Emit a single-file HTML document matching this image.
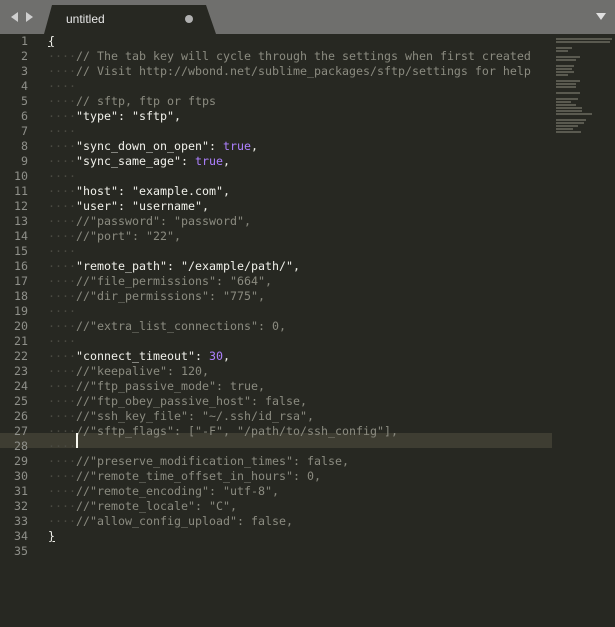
<!DOCTYPE html>
<html><head><meta charset="utf-8"><style>
*{margin:0;padding:0;box-sizing:border-box}
html,body{width:615px;height:627px;overflow:hidden;background:#272822}
.bar{position:absolute;left:0;top:0;width:615px;height:34px;background:#6f6f6d}
.tab{position:absolute;left:44px;top:5px;width:172px;height:29px;background:#272822;clip-path:polygon(8px 0,162px 0,172px 29px,0 29px);}
.tab span{position:absolute;left:22px;top:7px;font:12px "Liberation Sans",sans-serif;color:#e8e8e8}
.dot{position:absolute;left:141px;top:10px;width:8px;height:8px;border-radius:50%;background:#b0b0b0}
.arr{position:absolute;top:12px;width:0;height:0;border-top:5px solid transparent;border-bottom:5px solid transparent}
.code{position:absolute;left:0;top:34px;font:11.63px "DejaVu Sans Mono",monospace;line-height:15px;white-space:normal;color:#f0f0ea}
.ln{display:block;height:15px;white-space:pre}
.n{display:inline-block;width:28px;text-align:right;color:#8f908a;margin-right:20px}
.c{color:#8b8b80}
.w{color:#4a4a42}
.p{color:#ae81ff}
.hl{position:absolute;left:0;top:433px;width:552px;height:15px;background:#3e3d32}
.cur{position:absolute;left:76px;top:433px;width:2px;height:15px;background:#f8f8f0}
.mm{position:absolute;left:556px;top:38px;width:56px}
.mm div{height:2px;margin-bottom:1px;background:#5a5a50}
</style></head><body>
<div class="bar"></div>
<div class="arr" style="left:11px;border-right:7px solid #cfcfcf"></div>
<div class="arr" style="left:26px;border-left:7px solid #cfcfcf"></div>
<div class="tab"><span>untitled</span><div class="dot"></div></div>
<div class="arr" style="left:596px;top:13px;border:5px solid transparent;border-top:7px solid #e0e0e0;border-bottom:0"></div>
<div class="hl"></div>
<div class="code"><span class="ln"><span class="n">1</span><u>{</u></span><span class="ln"><span class="n">2</span><span class="w">····</span><span class="c">// The tab key will cycle through the settings when first created</span></span><span class="ln"><span class="n">3</span><span class="w">····</span><span class="c">// Visit http://wbond.net/sublime_packages/sftp/settings for help</span></span><span class="ln"><span class="n">4</span><span class="w">····</span></span><span class="ln"><span class="n">5</span><span class="w">····</span><span class="c">// sftp, ftp or ftps</span></span><span class="ln"><span class="n">6</span><span class="w">····</span>"type": "sftp",</span><span class="ln"><span class="n">7</span><span class="w">····</span></span><span class="ln"><span class="n">8</span><span class="w">····</span>"sync_down_on_open": <span class="p">true</span>,</span><span class="ln"><span class="n">9</span><span class="w">····</span>"sync_same_age": <span class="p">true</span>,</span><span class="ln"><span class="n">10</span><span class="w">····</span></span><span class="ln"><span class="n">11</span><span class="w">····</span>"host": "example.com",</span><span class="ln"><span class="n">12</span><span class="w">····</span>"user": "username",</span><span class="ln"><span class="n">13</span><span class="w">····</span><span class="c">//"password": "password",</span></span><span class="ln"><span class="n">14</span><span class="w">····</span><span class="c">//"port": "22",</span></span><span class="ln"><span class="n">15</span><span class="w">····</span></span><span class="ln"><span class="n">16</span><span class="w">····</span>"remote_path": "/example/path/",</span><span class="ln"><span class="n">17</span><span class="w">····</span><span class="c">//"file_permissions": "664",</span></span><span class="ln"><span class="n">18</span><span class="w">····</span><span class="c">//"dir_permissions": "775",</span></span><span class="ln"><span class="n">19</span><span class="w">····</span></span><span class="ln"><span class="n">20</span><span class="w">····</span><span class="c">//"extra_list_connections": 0,</span></span><span class="ln"><span class="n">21</span><span class="w">····</span></span><span class="ln"><span class="n">22</span><span class="w">····</span>"connect_timeout": <span class="p">30</span>,</span><span class="ln"><span class="n">23</span><span class="w">····</span><span class="c">//"keepalive": 120,</span></span><span class="ln"><span class="n">24</span><span class="w">····</span><span class="c">//"ftp_passive_mode": true,</span></span><span class="ln"><span class="n">25</span><span class="w">····</span><span class="c">//"ftp_obey_passive_host": false,</span></span><span class="ln"><span class="n">26</span><span class="w">····</span><span class="c">//"ssh_key_file": "~/.ssh/id_rsa",</span></span><span class="ln"><span class="n">27</span><span class="w">····</span><span class="c">//"sftp_flags": ["-F", "/path/to/ssh_config"],</span></span><span class="ln"><span class="n">28</span><span class="w">····</span></span><span class="ln"><span class="n">29</span><span class="w">····</span><span class="c">//"preserve_modification_times": false,</span></span><span class="ln"><span class="n">30</span><span class="w">····</span><span class="c">//"remote_time_offset_in_hours": 0,</span></span><span class="ln"><span class="n">31</span><span class="w">····</span><span class="c">//"remote_encoding": "utf-8",</span></span><span class="ln"><span class="n">32</span><span class="w">····</span><span class="c">//"remote_locale": "C",</span></span><span class="ln"><span class="n">33</span><span class="w">····</span><span class="c">//"allow_config_upload": false,</span></span><span class="ln"><span class="n">34</span><u>}</u></span><span class="ln"><span class="n">35</span></span></div>
<div class="cur"></div>
<div class="mm">
<div style="width:56px"></div><div style="width:54px"></div><div style="width:0"></div><div style="width:16px"></div><div style="width:12px"></div><div style="width:0"></div><div style="width:24px"></div><div style="width:20px"></div><div style="width:0"></div><div style="width:18px"></div><div style="width:16px"></div><div style="width:18px"></div><div style="width:12px"></div><div style="width:0"></div><div style="width:24px"></div><div style="width:20px"></div><div style="width:20px"></div><div style="width:0"></div><div style="width:24px"></div><div style="width:0"></div><div style="width:22px"></div><div style="width:15px"></div><div style="width:20px"></div><div style="width:26px"></div><div style="width:26px"></div><div style="width:36px"></div><div style="width:0"></div><div style="width:30px"></div><div style="width:28px"></div><div style="width:22px"></div><div style="width:17px"></div><div style="width:25px"></div>
</div>
</body></html>
